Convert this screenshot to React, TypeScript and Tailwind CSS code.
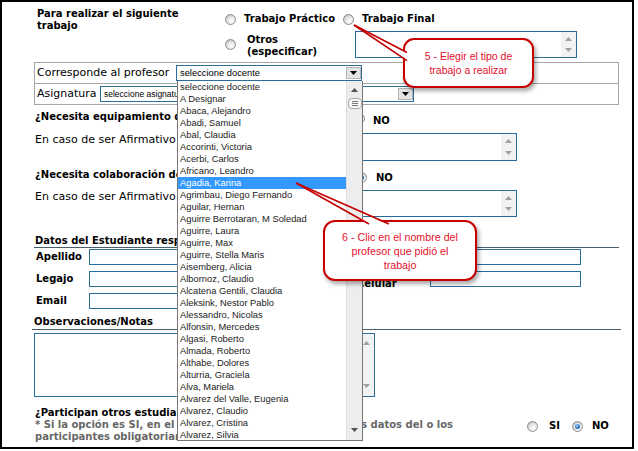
import React from "react";

const items = [
  "seleccione docente",
  "A Designar",
  "Abaca, Alejandro",
  "Abadi, Samuel",
  "Abal, Claudia",
  "Accorinti, Victoria",
  "Acerbi, Carlos",
  "Africano, Leandro",
  "Agadia, Karina",
  "Agrimbau, Diego Fernando",
  "Aguilar, Hernan",
  "Aguirre Berrotaran, M Soledad",
  "Aguirre, Laura",
  "Aguirre, Max",
  "Aguirre, Stella Maris",
  "Aisemberg, Alicia",
  "Albornoz, Claudio",
  "Alcatena Gentili, Claudia",
  "Aleksink, Nestor Pablo",
  "Alessandro, Nicolas",
  "Alfonsin, Mercedes",
  "Algasi, Roberto",
  "Almada, Roberto",
  "Althabe, Dolores",
  "Alturria, Graciela",
  "Alva, Mariela",
  "Alvarez del Valle, Eugenia",
  "Alvarez, Claudio",
  "Alvarez, Cristina",
  "Alvarez, Silvia",
];

function Radio({ checked = false, className = "" }: { checked?: boolean; className?: string }) {
  return (
    <span
      className={
        "relative inline-block w-[11px] h-[11px] shrink-0 rounded-full border border-[#8e8e8e] bg-[radial-gradient(circle_at_62%_68%,#ffffff_0%,#e4e4e4_50%,#a8a8a8_100%)] " +
        className
      }
    >
      {checked && (
        <span className="absolute left-[2px] top-[2px] w-[5px] h-[5px] rounded-full bg-[radial-gradient(circle_at_40%_35%,#a6d8ff_0%,#2274c4_55%,#0b3c78_100%)]" />
      )}
    </span>
  );
}

function TextArea({ className = "", pad = "py-[5px]" }: { className?: string; pad?: string }) {
  return (
    <div className={"flex justify-end border border-[#2a6c9c] bg-white shrink-0 " + className}>
      <div className={"w-[15px] h-full bg-[#f2f2f2] flex flex-col items-center justify-between " + pad}>
        <svg width="7" height="4" viewBox="0 0 7 4">
          <polygon points="0,4 3.5,0 7,4" fill="#a0a0a0" />
        </svg>
        <svg width="7" height="4" viewBox="0 0 7 4">
          <polygon points="0,0 7,0 3.5,4" fill="#a0a0a0" />
        </svg>
      </div>
    </div>
  );
}

function Select({ text, className = "", textClass = "text-[9.35px]" }: { text: string; className?: string; textClass?: string }) {
  return (
    <div className={"flex items-center h-[16px] border border-[#2a6c9c] bg-white shrink-0 " + className}>
      <span
        className={
          "flex-1 pl-[3px] leading-[14px] whitespace-nowrap overflow-hidden text-black font-['Liberation_Sans',Arial,sans-serif] " +
          textClass
        }
      >
        {text}
      </span>
      <div className="w-[15px] h-[12px] bg-[#e3e3e3] border border-[#b5b5b5] flex items-center justify-center">
        <svg width="7" height="4" viewBox="0 0 7 4">
          <polygon points="0,0 7,0 3.5,4" fill="#000" />
        </svg>
      </div>
    </div>
  );
}

export default function App() {
  return (
    <div className="w-[638px] h-[451px] bg-white">
      <div className="relative w-[634px] h-[449px] border-2 border-black overflow-hidden bg-white text-black font-['DejaVu_Sans',Verdana,sans-serif]">
        <div className="pl-[33px] pt-[6px]">
          {/* Section: tipo de trabajo */}
          <div className="flex">
            <div className="w-[190px] pl-[2px]">
              <p className="w-[150px] text-[10px] font-bold leading-[12px]">Para realizar el siguiente trabajo</p>
            </div>
            <div className="flex flex-col pt-[5px]">
              <div className="flex items-center h-[12px] text-[10px] font-bold leading-[12px]">
                <Radio />
                <span className="ml-[8px] w-[99px] whitespace-nowrap">Trabajo Práctico</span>
                <Radio />
                <span className="ml-[8px] whitespace-nowrap">Trabajo Final</span>
              </div>
              <div className="flex items-start mt-[6px]">
                <Radio className="mt-[8px]" />
                <div className="ml-[11px] w-[108px] mt-[3px] text-[10px] font-bold leading-[12px]">
                  Otros
                  <br />
                  (especificar)
                </div>
                <TextArea className="w-[222px] h-[27px]" />
              </div>
            </div>
          </div>

          {/* Box: profesor / asignatura */}
          <div className="mt-[4px] -ml-[1px] w-[585px] border border-[#a6a6a6] text-[11px] leading-[12px]">
            <div className="flex items-center h-[21px] border-b border-[#a6a6a6]">
              <span className="w-[141px] pl-[2px] whitespace-nowrap">Corresponde al profesor</span>
              <Select text="seleccione docente" className="w-[186px]" />
            </div>
            <div className="flex items-center h-[20px]">
              <span className="w-[65px] pl-[2px] whitespace-nowrap">Asignatura</span>
              <Select text="seleccione asignatura" className="w-[314px]" textClass="text-[8.5px]" />
            </div>
          </div>

          {/* Equipamiento */}
          <div className="mt-[6px] flex items-start h-[16px]">
            <span className="w-[142px] shrink-0 text-[10px] font-bold leading-[12px] whitespace-nowrap overflow-hidden">
              ¿Necesita equipamiento de
            </span>
            <Radio className="ml-[177px] mt-[2px]" />
            <span className="ml-[8px] mt-[4px] text-[10px] font-bold leading-[12px]">NO</span>
          </div>
          <div className="mt-[6px] flex items-start">
            <span className="w-[142px] shrink-0 mt-[1px] text-[11px] leading-[12px] whitespace-nowrap overflow-hidden">
              En caso de ser Afirmativo
            </span>
            <TextArea className="ml-[185px] w-[155px] h-[28px]" />
          </div>

          {/* Colaboración */}
          <div className="mt-[8px] flex items-start h-[14px]">
            <span className="w-[142px] shrink-0 text-[10px] font-bold leading-[12px] whitespace-nowrap overflow-hidden">
              ¿Necesita colaboración de
            </span>
            <Radio checked className="ml-[179px] mt-[3px]" />
            <span className="ml-[9px] mt-[3px] text-[10px] font-bold leading-[12px]">NO</span>
          </div>
          <div className="mt-[7px] flex items-start">
            <span className="w-[142px] shrink-0 mt-[1px] text-[11px] leading-[12px] whitespace-nowrap overflow-hidden">
              En caso de ser Afirmativo
            </span>
            <TextArea className="ml-[185px] w-[155px] h-[27px]" />
          </div>

          {/* Datos del estudiante */}
          <div className="mt-[18px] -ml-[1px] w-[585px] pl-[1px] h-[13px] border-b border-[#4a5d6c] text-[10px] font-bold leading-[12px]">
            <span className="block w-[142px] whitespace-nowrap overflow-hidden">Datos del Estudiante responsable</span>
          </div>
          <div className="flex mt-[1px]">
            <div className="w-[322px] flex flex-col gap-[6px]">
              {["Apellido", "Legajo", "Email"].map((l) => (
                <div key={l} className="flex items-center h-[16px]">
                  <span className="w-[54px] pl-[1px] text-[10px] font-bold leading-[12px]">{l}</span>
                  <div className="w-[230px] h-[16px] border border-[#2a6c9c] bg-white" />
                </div>
              ))}
            </div>
            <div className="flex flex-col gap-[6px]">
              <div className="flex h-[16px]">
                <span className="w-[73px]" />
                <div className="w-[151px] h-[16px] border border-[#2a6c9c] bg-white" />
              </div>
              <div className="flex items-start h-[16px]">
                <span className="w-[73px] mt-[7px] text-[10px] font-bold leading-[12px]">Celular</span>
                <div className="w-[151px] h-[16px] border border-[#2a6c9c] bg-white" />
              </div>
            </div>
          </div>

          {/* Observaciones */}
          <div className="mt-[7px] -ml-[3px] w-[589px] pl-[2px] h-[14px] border-b border-[#4a5d6c] text-[10px] font-bold leading-[12px] whitespace-nowrap">
            Observaciones/Notas
          </div>
          <TextArea className="mt-[3px] -ml-[1px] w-[341px] h-[64px]" pad="pt-[7px] pb-[8px]" />

          {/* Participan otros */}
          <div className="mt-[10px] flex">
            <div className="w-[418px] text-[10px] font-bold leading-[12px] whitespace-nowrap">
              <div className="w-[142px] overflow-hidden">¿Participan otros estudiantes</div>
              <div className="flex justify-between text-[#676767]">
                <span className="w-[142px] overflow-hidden">* Si la opción es SI, en el</span>
                <span>s datos del o los</span>
              </div>
              <div className="w-[142px] overflow-hidden text-[#676767]">participantes obligatoriamente</div>
            </div>
            <div className="ml-[74px] mt-[13px] flex items-center h-[12px] text-[10px] font-bold leading-[12px]">
              <Radio />
              <span className="ml-[11px] w-[23px]">SI</span>
              <Radio checked />
              <span className="ml-[9px]">NO</span>
            </div>
          </div>
        </div>

        {/* Open dropdown list */}
        <div className="absolute left-[175px] top-[79px] w-[186px] h-[360px] bg-white border border-t-0 border-[#767676] flex font-['Liberation_Sans',Arial,sans-serif]">
          <div className="flex-1 overflow-hidden">
            {items.map((it, i) => (
              <div
                key={it}
                className={
                  i === 8
                    ? "h-[12px] leading-[12px] pl-[2px] text-[9.35px] whitespace-nowrap bg-[#3399ff] text-white"
                    : "h-[12px] leading-[12px] pl-[2px] text-[9.35px] whitespace-nowrap text-[#222222]"
                }
              >
                {it}
              </div>
            ))}
          </div>
          <div className="w-[16px] h-full bg-[#ededed] border-l border-[#dedede] flex flex-col items-center pt-[7px] pb-[8px]">
            <svg width="7" height="4" viewBox="0 0 7 4">
              <polygon points="0,4 3.5,0 7,4" fill="#555" />
            </svg>
            <div className="mt-[6px] w-[14px] h-[11px] rounded-[4px] border border-[#a9a9a9] bg-[#f7f7f7] flex flex-col items-center justify-center gap-[1px]">
              <span className="block w-[6px] h-[1px] bg-[#777]" />
              <span className="block w-[6px] h-[1px] bg-[#777]" />
              <span className="block w-[6px] h-[1px] bg-[#777]" />
            </div>
            <div className="flex-1" />
            <svg width="7" height="4" viewBox="0 0 7 4">
              <polygon points="0,0 7,0 3.5,4" fill="#555" />
            </svg>
          </div>
        </div>

        {/* Callout 5 */}
        <div className="absolute left-[401px] top-[36px] w-[131px] h-[50px] rounded-[11px] border-2 border-[#c70000] bg-white shadow-[2px_3px_4px_rgba(0,0,0,0.35)] flex flex-col items-center justify-center text-center font-['Liberation_Sans',Arial,sans-serif] text-[10.5px] leading-[14px] text-[#e3102d]">
          <span>5 - Elegir el tipo de</span>
          <span>trabajo a realizar</span>
        </div>

        {/* Callout 6 */}
        <div className="absolute left-[321px] top-[218px] w-[154px] h-[61px] rounded-[12px] border-2 border-[#c70000] bg-white shadow-[2px_3px_4px_rgba(0,0,0,0.35)] flex flex-col items-center justify-center text-center font-['Liberation_Sans',Arial,sans-serif] text-[10.7px] leading-[14px] text-[#e3102d]">
          <span>6 - Clic en el nombre del</span>
          <span>profesor que pidió el</span>
          <span>trabajo</span>
        </div>

        {/* Callout pointers */}
        <svg className="absolute left-0 top-0 pointer-events-none" width="634" height="449" viewBox="0 0 634 449">
          <polygon points="399.5,47.8 405,50.6 405,57.5 399.5,54.3" fill="#fff" />
          <line x1="352" y1="23" x2="405" y2="50.5" stroke="#c40000" strokeWidth="1.6" />
          <line x1="352" y1="23" x2="405" y2="58.6" stroke="#c40000" strokeWidth="1.6" />

          <polygon points="359,217 374,217 385,222.5 368,222.5" fill="#fff" />
          <line x1="294" y1="181" x2="367" y2="222" stroke="#c40000" strokeWidth="1.6" />
          <line x1="294" y1="181" x2="387" y2="222" stroke="#c40000" strokeWidth="1.6" />
        </svg>
      </div>
    </div>
  );
}
